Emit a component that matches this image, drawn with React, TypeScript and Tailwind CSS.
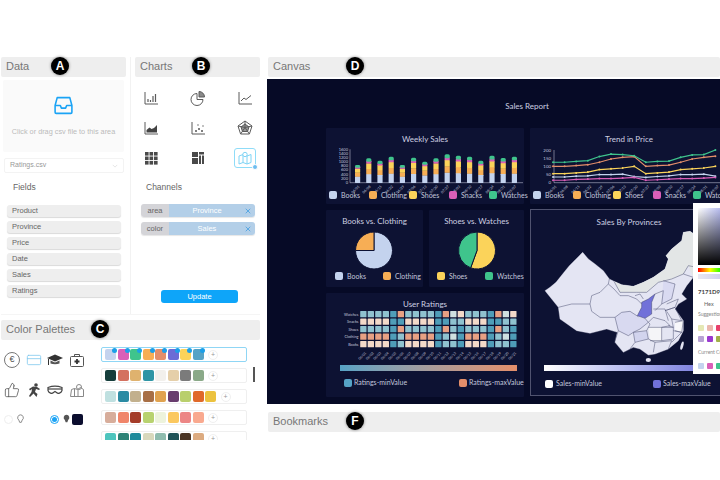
import React from 'react';
import { CreditCard, ThumbsUp, X } from 'lucide-react';

const C = { books: '#c4d3ee', clothing: '#f7ae55', shoes: '#fbd35a', snacks: '#d95fb8', watches: '#3fc48c' };
const legend5 = [
  { label: 'Books', color: C.books },
  { label: 'Clothing', color: C.clothing },
  { label: 'Shoes', color: C.shoes },
  { label: 'Snacks', color: C.snacks },
  { label: 'Watches', color: C.watches },
];
const dates = ['06/01', '06/08', '06/15', '06/22', '06/29', '07/06', '07/13', '07/20', '07/27', '08/03', '08/10', '08/17', '08/24', '08/31', '09/07'];

const fields = ['Product', 'Province', 'Price', 'Date', 'Sales', 'Ratings'];
const palettes = [
  ['#c4d3ee', '#d95fb8', '#3fc48c', '#f7ae55', '#e38e6a', '#6c6bd6', '#fbd35a', '#56a3c6'],
  ['#163e3c', '#d4715f', '#dfb26e', '#2f95a5', '#f2f0ec', '#e5cfa9', '#7b7b7b', '#8aa988'],
  ['#bfe0e0', '#2b8ba3', '#c2b08d', '#a86f45', '#e0a24f', '#683c6e', '#b9cf6c', '#e0692a', '#ecc23e'],
  ['#d7ad9b', '#f0856a', '#a43c28', '#b8d26f', '#edf3dc', '#fbc85f', '#ec8685', '#f9a98f'],
  ['#4dc4bd', '#2e8276', '#1f8b9b', '#d8d8bc', '#8fbcae', '#215458', '#4b3524', '#dcab80'],
];

function Badge({ letter, left }: { letter: string; left: number }) {
  return (
    <div
      className="absolute top-[0px] flex h-[18px] w-[18px] items-center justify-center rounded-full bg-black text-[12px] font-bold text-white shadow-[0_0_3px_rgba(0,0,0,0.5)]"
      style={{ left }}
    >
      {letter}
    </div>
  );
}

function PanelHeader({ title, letter, left }: { title: string; letter: string; left: number }) {
  return (
    <div className="relative flex h-[20px] items-center rounded-[2px] bg-[#eeeeee] pb-[1px] pl-[5px] text-[11px] text-[#777777]">
      {title}
      <Badge letter={letter} left={left} />
    </div>
  );
}

const stroke = '#5b5b5b';
const chartIcons = [
  <g key="bar" stroke={stroke} fill="none">
    <path d="M2 2v12h13" strokeWidth="1" />
    <path d="M5 12V9M7.500 12V10M10 12V6M12.500 12V4" strokeWidth="1.200" />
  </g>,
  <g key="pie" stroke={stroke} fill="none" strokeWidth="1">
    <path d="M7 3.500a6 6 0 1 0 6 6H7z" />
    <path d="M9 1.500a5.500 5.500 0 0 1 5.500 5.500H9z" fill="#8a8a8a" />
  </g>,
  <g key="line" stroke={stroke} fill="none" strokeWidth="1">
    <path d="M2 2v12h13" />
    <path d="M4 11l3-3 2 1.500 5-4" />
  </g>,
  <g key="area" stroke={stroke}>
    <path d="M2 2v12h13" fill="none" />
    <path d="M3.500 12.500V10l3-2.500 2 1.500 2.500-1 3-3v7.500z" fill="#444" stroke="none" />
  </g>,
  <g key="scatter" fill="#555">
    <path d="M2 2v12h13" fill="none" stroke={stroke} />
    <circle cx="6" cy="11" r="1" />
    <circle cx="9" cy="9" r="1" />
    <circle cx="12" cy="11" r="1" />
    <circle cx="8" cy="5" r=".7" />
    <circle cx="13" cy="6" r=".7" />
  </g>,
  <g key="radar" fill="none" stroke={stroke} strokeWidth="1">
    <path d="M8 1l7 5-2.600 8H3.600L1 6z" />
    <path d="M8 4l4 3-1.500 4.500h-5L4 7z" fill="#999" />
    <path d="M8 1v6.500M15 6L8 7.500M12.400 14L8 7.500M3.600 14L8 7.500M1 6l7 1.500" />
  </g>,
  <g key="grid" fill="#4a4a4a">
    {[2, 6.5, 11].flatMap((y) =>
      [2, 6.5, 11].map((x) => <rect key={`${x}-${y}`} x={x} y={y} width="3.600" height="3.600" />)
    )}
  </g>,
  <g key="tree" fill="#4a4a4a">
    <rect x="2" y="2" width="6" height="5" />
    <rect x="2" y="8" width="6" height="6" />
    <rect x="9" y="2" width="5" height="2.500" />
    <rect x="9" y="5.500" width="2" height="8.500" />
    <rect x="12" y="5.500" width="2" height="8.500" />
  </g>,
  <g key="map" fill="none" stroke="#7fd4f5" strokeWidth="1">
    <path d="M2 6l4-1.500 4 1.500 4-1.500v8l-4 1.500-4-1.500-4 1.500z" />
    <path d="M6 4.500v8M10 6v8" />
    <circle cx="8" cy="4.500" r="2.200" fill="#fff" />
  </g>,
];

function Legend({ items, step, pad }: { items: { label: string; color: string }[]; step: number; pad: number }) {
  return (
    <div className="flex h-[10px] items-center" style={{ paddingLeft: pad }}>
      {items.map((i) => (
        <div key={i.label} className="flex shrink-0 items-center gap-[4px]" style={{ width: step }}>
          <span className="h-[8px] w-[8px] shrink-0 rounded-[2px]" style={{ background: i.color }} />
          <span className="text-[7px] leading-none whitespace-nowrap text-[#c3c7dc]">{i.label}</span>
        </div>
      ))}
    </div>
  );
}

function CardTitle({ children }: { children: React.ReactNode }) {
  return <div className="pt-[6px] text-center text-[8px] leading-[10px] text-[#cdd0e2]">{children}</div>;
}

function WeeklySales() {
  const tops = [135, 115, 122, 110, 135, 113, 125, 115, 103, 107, 110, 122, 107, 114, 110];
  const base = 182.7;
  return (
    <svg viewBox="326 144 198 46" width={198} height={46} className="block overflow-visible">
      <path d="M350 149.300V182.700H523" stroke="#d8dbea" strokeWidth=".5" fill="none" />
      {[0, 200, 400, 600, 800, 1000, 1200, 1400, 1600].map((v, i) => (
        <text key={v} x={348} y={184 - i * 4.17} fontSize="4" textAnchor="end" fill="#c3c7dc">{v}</text>
      ))}
      {tops.map((t, i) => {
        const x = 355 + i * 11.2;
        const h = (188 - t) / 3;
        const parts = [
          [0.36, C.books],
          [0.22, C.clothing],
          [0.22, C.shoes],
          [0.1, C.snacks],
          [0.1, C.watches],
        ] as const;
        let y = base;
        return (
          <g key={i}>
            {parts.map(([p, col], k) => {
              const ph = h * p;
              y -= ph;
              return <rect key={k} x={x} y={y} width="5.200" height={ph + (k === 4 ? 1 : 0.3)} rx={k === 4 ? 1.5 : 0.4} fill={col} />;
            })}
            <text x={x + 4} y={187} fontSize="3.600" fill="#c3c7dc" textAnchor="end" transform={`rotate(-45 ${x + 4} 186)`}>{dates[i]}</text>
          </g>
        );
      })}
    </svg>
  );
}

function TrendPrice() {
  const series = [
    { c: C.books, v: [35, 35, 40, 42, 50, 50, 52, 38, 32, 38, 42, 50, 50, 52, 40] },
    { c: C.snacks, v: [15, 15, 20, 22, 25, 25, 28, 32, 15, 18, 22, 25, 25, 28, 32] },
    { c: C.shoes, v: [55, 55, 60, 65, 80, 85, 90, 100, 55, 60, 65, 80, 85, 90, 100] },
    { c: '#e38e6a', v: [100, 100, 105, 110, 125, 145, 155, 160, 100, 105, 108, 125, 145, 155, 162] },
    { c: C.watches, v: [125, 125, 130, 135, 160, 175, 172, 165, 125, 130, 132, 155, 170, 172, 200] },
  ];
  const px = (i: number) => 553 + i * 11.6;
  const py = (v: number) => 182.7 - (v / 200) * 32.7;
  return (
    <svg viewBox="530 144 198 46" width={198} height={46} className="block overflow-visible">
      <path d="M554 150V182.700H725" stroke="#d8dbea" strokeWidth=".5" fill="none" />
      {[0, 50, 100, 150, 200].map((v) => (
        <text key={v} x={551} y={py(v) + 1.500} fontSize="4.400" textAnchor="end" fill="#c3c7dc">{v}</text>
      ))}
      {series.map((s) => (
        <g key={s.c}>
          <polyline points={s.v.map((v, i) => `${px(i)},${py(v)}`).join(' ')} fill="none" stroke={s.c} strokeWidth="1.200" />
          {s.v.map((v, i) => <circle key={i} cx={px(i)} cy={py(v)} r="1" fill={s.c} />)}
        </g>
      ))}
      {dates.map((d, i) => (
        <text key={d} x={px(i) + 3} y={187} fontSize="3.600" fill="#c3c7dc" textAnchor="end" transform={`rotate(-45 ${px(i) + 3} 186)`}>{d}</text>
      ))}
    </svg>
  );
}

function wedge(cx: number, cy: number, r: number, a0: number, a1: number) {
  const p = (a: number) => [cx + r * Math.sin((a * Math.PI) / 180), cy - r * Math.cos((a * Math.PI) / 180)];
  const [x0, y0] = p(a0);
  const [x1, y1] = p(a1);
  return `M${cx} ${cy}L${x0} ${y0}A${r} ${r} 0 ${a1 - a0 > 180 ? 1 : 0} 1 ${x1} ${y1}Z`;
}

function Pie({ a, b, split }: { a: string; b: string; split: number }) {
  return (
    <svg viewBox="0 0 95 45" width={95} height={45} className="block">
      <path d={wedge(48, 24.500, 18.500, 0, split)} fill={a} stroke="#0d1233" strokeWidth="1" />
      <path d={wedge(48, 24.500, 18.500, split, 360)} fill={b} stroke="#0d1233" strokeWidth="1" />
    </svg>
  );
}

const heatRows = [
  { name: 'Watches', p: 'bbbbaebbbbaecdbbbaecd' },
  { name: 'Snacks', p: 'ddddaaddddaabbdddaabb' },
  { name: 'Shoes', p: 'bbbbaebbbbaebabbbaeba' },
  { name: 'Clothing', p: 'eeeeabeeeeabcaeeeabca' },
  { name: 'Books', p: 'ddddabddddabbadddabba' },
];
const heatColor: Record<string, string> = { a: '#4f9db8', b: '#8fc2cf', c: '#cfe0e0', d: '#f3d9c8', e: '#e8a083' };

function Heatmap() {
  return (
    <svg viewBox="326 310 198 50" width={198} height={50} className="block overflow-visible">
      {heatRows.map((r, ri) => (
        <g key={r.name}>
          <text x={358.500} y={316.500 + ri * 7.5} fontSize="3.800" textAnchor="end" fill="#c3c7dc">{r.name}</text>
          {r.p.split('').map((ch, ci) => (
            <rect key={ci} x={360.200 + ci * 7.5} y={312 + ri * 7.5} width="6.300" height="6.300" rx=".6" fill={heatColor[ch]} />
          ))}
        </g>
      ))}
      {Array.from({ length: 21 }).map((_, i) => {
        const x = 365 + i * 7.5;
        return <text key={i} x={x} y={355} fontSize="3.400" textAnchor="end" fill="#c3c7dc" transform={`rotate(-45 ${x} 353)`}>{`06/${String(i + 1).padStart(2, '0')}`}</text>;
      })}
    </svg>
  );
}

function ChinaMap() {
  const borders = [
    '55,250 95,240 150,240 155,215 180,205 205,180 208,165',
    '150,240 155,262 180,280 225,280 245,265 270,262 295,278',
    '205,180 222,195 240,215 265,215 290,225 305,240',
    '285,215 300,210 310,225',
    '222,172 240,205 290,205 320,205 355,175 395,165 430,150 445,125',
    '225,280 235,320 225,350',
    '315,283 325,295 300,315 280,325 265,335 235,320',
    '325,295 330,300 320,320 280,325',
    '320,320 325,345 285,355 280,325',
    '285,355 270,375',
    '325,345 345,355 340,385',
    '345,355 395,350 385,375',
    '325,310 365,310 365,350 330,350',
    '325,295 340,280 375,290 390,305 365,310',
    '340,255 375,255 385,290',
    '345,210 370,200 365,240 345,260',
    '370,170 405,180 395,225 365,240',
    '380,240 415,225 405,250 375,260',
    '375,260 405,250 425,290 395,285',
    '380,262 395,285 400,310 385,305',
    '405,295 430,290 425,325 405,320',
    '365,310 400,310 400,345 365,350',
    '400,320 425,325 395,355',
    '445,125 470,130 520,120',
    '430,150 460,160',
  ];
  return (
    <svg viewBox="-30 9 594 411" width={198} height={137} className="block">
      <path
        d="M15 200L30 190 48 175 72 145 88 125 105 108 128 85 145 105 165 120 190 140 208 165 222 172 245 182 280 187 310 175 340 160 375 135 385 105 378 95 395 75 425 50 430 25 450 22 470 35 520 60 520 130 460 160 440 185 425 210 440 225 415 240 405 255 430 290 430 320 415 350 385 375 345 390 325 393 300 375 280 370 250 385 225 355 232 325 200 315 150 328 110 320 60 285 55 250 35 225Z"
        fill="#e4e5f3"
        stroke="#e4e5f3"
      />
      <path d="M222 172L245 182 280 187 310 175 340 160 375 135 385 105 378 95 395 75 425 50 430 25 450 22 470 35 520 60 520 130 460 160 445 125 430 150 395 165 355 175 320 205 240 205Z" fill="#e3e6e6" />
      <path d="M225 280L245 265 270 262 295 278 315 283 325 295 300 315 280 325 265 335 235 320Z" fill="#d8d9f0" />
      <path d="M280 325L320 320 325 345 285 355Z" fill="#d2d4ee" />
      <path d="M325 310L365 310 365 350 330 350Z" fill="#f5f5f8" />
      <path d="M405 295L430 290 425 325 405 320Z" fill="#f8f8fb" />
      <path d="M370 170L405 180 395 225 365 240Z" fill="#d9daf1" />
      <path d="M345 210L335 235 335 270 315 283 292 275 305 250 305 235 325 225Z" fill="#7171d9" stroke="#44486e" strokeWidth="1.500" />
      {borders.map((b) => <polyline key={b} points={b} fill="none" stroke="#4b4f70" strokeWidth="1.500" />)}
      <ellipse cx="325" cy="408" rx="8" ry="6" fill="#e4e5f3" />
      <ellipse cx="426" cy="365" rx="4" ry="13" fill="#e4e5f3" transform="rotate(15 426 365)" />
    </svg>
  );
}

function ColorPicker() {
  const row = (colors: string[]) => (
    <div className="flex gap-[3px]">
      {colors.map((c) => <span key={c} className="h-[6px] w-[6px] shrink-0 rounded-[1px]" style={{ background: c }} />)}
    </div>
  );
  return (
    <div className="absolute left-[426px] top-[124px] h-[171px] w-[60px] bg-white pl-[5px] pt-[5px]">
      <div className="relative h-[57px] w-[48px] bg-gradient-to-r from-white to-[#7171d9]">
        <div className="absolute inset-0 bg-gradient-to-b from-transparent to-black" />
      </div>
      <div className="mt-[3px] h-[4px] w-[48px] bg-[linear-gradient(to_right,#f00,#ff0,#0f0,#0ff,#00f)]" />
      <div className="mt-[2px] h-[5px] w-[48px] bg-gradient-to-r from-[#e8e8f2] to-[#b5b5ea]" />
      <div className="mt-[9px] text-[6px] leading-[8px] font-bold text-[#444444]">7171D9</div>
      <div className="mt-[4px] pl-[6px] text-[5.500px] leading-[8px] text-[#666666]">Hex</div>
      <div className="mt-[3px] text-[5px] leading-[7px] whitespace-nowrap text-[#888888]">Suggestions</div>
      <div className="mt-[7px] flex flex-col gap-[5px]">
        {row(['#e5e8b5', '#ebb8ae', '#e8406b'])}
        {row(['#b7a3d4', '#9a3ad0', '#a2b04a'])}
      </div>
      <div className="mt-[7px] text-[5px] leading-[7px] whitespace-nowrap text-[#888888]">Current Color</div>
      <div className="mt-[7px]">{row(['#c4d3ee', '#d95fb8', '#3fc48c'])}</div>
    </div>
  );
}

function Canvas() {
  const card = 'rounded-[1px] bg-[#0d1233]';
  return (
    <div className="relative -ml-px mt-[2px] h-[325px] overflow-hidden bg-[#060a26] pl-[59px] [font-family:Lato,sans-serif]">
      <div className="flex h-[49px] w-[402px] items-end justify-center pb-[17px] text-[8px] leading-[10px] text-[#cdd0e2]">Sales Report</div>
      <div className="flex w-[402px] gap-[6px]">
        <div className="flex w-[198px] shrink-0 flex-col gap-[6px]">
          <div className={`${card} h-[76px]`}>
            <CardTitle>Weekly Sales</CardTitle>
            <WeeklySales />
            <Legend items={legend5} step={40} pad={3} />
          </div>
          <div className="flex h-[77px] gap-[6px]">
            <div className={`${card} w-[97px]`}>
              <CardTitle>Books vs. Clothing</CardTitle>
              <Pie a={C.books} b={C.clothing} split={270} />
              <Legend items={[legend5[0], legend5[1]]} step={48} pad={9} />
            </div>
            <div className={`${card} w-[95px]`}>
              <CardTitle>Shoes vs. Watches</CardTitle>
              <Pie a={C.shoes} b={C.watches} split={200} />
              <Legend items={[legend5[2], legend5[4]]} step={48} pad={8} />
            </div>
          </div>
          <div className={`${card} h-[104px]`}>
            <CardTitle>User Ratings</CardTitle>
            <Heatmap />
            <div className="ml-[14px] mt-[6px] h-[6px] w-[177px] bg-gradient-to-r from-[#56a3c6] to-[#e38e6a]" />
            <div className="ml-[18px] mt-[7px] flex h-[9px] w-[180px] items-center text-[7px] whitespace-nowrap text-[#c3c7dc]">
              <span className="mr-[2px] h-[8px] w-[8px] shrink-0 rounded-[2px] bg-[#56a3c6]" />
              <span className="w-[105px] shrink-0">Ratings-minValue</span>
              <span className="mr-[2px] h-[8px] w-[8px] shrink-0 rounded-[2px] bg-[#e38e6a]" />
              <span>Ratings-maxValue</span>
            </div>
          </div>
        </div>
        <div className="flex w-[198px] shrink-0 flex-col gap-[5px]">
          <div className={`${card} h-[76px]`}>
            <CardTitle>Trend in Price</CardTitle>
            <TrendPrice />
            <Legend items={legend5} step={40} pad={3} />
          </div>
          <div className="h-[187px] w-[198px] border border-[#50536f] bg-[#0d1233]">
            <div className="flex h-[17px] items-end justify-center text-[8px] leading-[10px] text-[#cdd0e2]">Sales By Provinces</div>
            <div className="-ml-px">
              <ChinaMap />
            </div>
            <div className="ml-[13px] mt-[1px] h-[6px] w-[172px] bg-gradient-to-r from-white to-[#7171d9]" />
            <div className="ml-[14px] mt-[8px] flex h-[9px] items-center text-[7px] whitespace-nowrap text-[#c3c7dc]">
              <span className="mr-[3px] h-[8px] w-[8px] shrink-0 rounded-[2px] bg-white" />
              <span className="w-[97px] shrink-0">Sales-minValue</span>
              <span className="mr-[2px] h-[8px] w-[8px] shrink-0 rounded-[2px] bg-[#7171d9]" />
              <span>Sales-maxValue</span>
            </div>
          </div>
        </div>
      </div>
      <ColorPicker />
    </div>
  );
}

function PaletteIcons() {
  const c = 'h-[16px] w-[16px] shrink-0';
  return (
    <div className="w-[100px] shrink-0 pl-[3px] pt-[12px] text-[#555555]">
      <div className="flex gap-[5.500px]">
        <span className="flex h-[16px] w-[16px] items-center justify-center rounded-full border border-[#777777] text-[9px]">€</span>
        <CreditCard className={`${c} text-[#7fc8ee]`} strokeWidth={1.2} />
        <svg viewBox="0 0 16 16" className={c} fill="#333333">
          <path d="M8 2.500L16 6 8 9.500 0 6z" />
          <path d="M3.500 8.500v3c2.500 1 6.500 1 9 0v-3L8 10.500z" fill="#555555" />
          <path d="M1.500 7v6" stroke="#333333" fill="none" />
        </svg>
        <svg viewBox="0 0 16 16" className={c} fill="none" stroke="#555555" strokeWidth="1">
          <rect x="1.500" y="4.500" width="13" height="10" rx="1" />
          <path d="M5.500 4.500V2.500h5v2" />
          <path d="M8 7v5M5.500 9.500h5" strokeWidth="1.800" stroke="#333333" />
        </svg>
      </div>
      <div className="mt-[14px] flex gap-[5.500px]">
        <ThumbsUp className={c} strokeWidth={1.2} />
        <svg viewBox="0 0 16 16" className={c} fill="#444444">
          <circle cx="10" cy="3" r="1.800" />
          <path d="M3 7l4-2.500 4 .5 3 2-1 1-3-1-1 3 2.500 2-1 3-3-3.500-3.500 3.500-1-1 2.500-4 .5-3-2 1.500z" />
        </svg>
        <svg viewBox="0 0 16 16" className={c} fill="none" stroke="#444444" strokeWidth="1.200">
          <path d="M1 5.500c4-1.500 10-1.500 14 0v3c-1 3-4 3.500-5.500 2L8 9.500l-1.500 1c-1.500 1.500-4.500 1-5.500-2z" />
          <path d="M1 7h14" />
        </svg>
        <svg viewBox="0 0 16 16" className={c} fill="none" stroke="#888888" strokeWidth="1">
          <path d="M1.500 14.500l1-7 3-1 3 1 3-2 3 2v7z" />
          <circle cx="10" cy="5" r="2.500" />
          <path d="M5.500 6.500v8M9 8v6.500" />
        </svg>
      </div>
      <div className="mt-[15px] flex h-[12px] items-center">
        <span className="h-[9px] w-[9px] rounded-full border border-[#eeeeee]" />
        <svg viewBox="0 0 10 12" className="ml-[3px] h-[10px] w-[9px]" fill="none" stroke="#777777">
          <path d="M5 1a3.500 3.500 0 0 0-2 6.300L4 10h2l1-2.700A3.500 3.500 0 0 0 5 1z" />
        </svg>
        <span className="ml-[25px] flex h-[9px] w-[9px] items-center justify-center rounded-full border border-[#1aa3f5]">
          <span className="h-[5px] w-[5px] rounded-full bg-[#1aa3f5]" />
        </span>
        <svg viewBox="0 0 10 12" className="ml-[3px] h-[10px] w-[9px]" fill="#555555">
          <path d="M5 1a3.500 3.500 0 0 0-2 6.300L4 10h2l1-2.700A3.500 3.500 0 0 0 5 1z" />
        </svg>
        <span className="ml-[1px] h-[11px] w-[11px] rounded-[2px] bg-[#0b0d2e]" />
      </div>
    </div>
  );
}

function PaletteList() {
  return (
    <div className="relative w-[160px] pt-[7px]">
      <div className="flex w-[146px] flex-col gap-[6px]">
        {palettes.map((p, i) => (
          <div
            key={i}
            className={`flex h-[15px] items-center gap-[1.500px] rounded-[2px] border pl-[3px] ${i === 0 ? 'border-[#8fd6f5]' : 'border-[#efefef]'}`}
          >
            {p.map((col, k) => (
              <span key={k} className="relative h-[11px] w-[11px] shrink-0 rounded-[2px]" style={{ background: col }}>
                {i === 0 && <span className="absolute -right-[1px] -top-[1px] h-[5px] w-[5px] rounded-full bg-[#1c9fe8]" />}
              </span>
            ))}
            <span className="ml-[3px] flex h-[10px] w-[10px] items-center justify-center rounded-full border border-[#f0f0f0] text-[7px] leading-none text-[#999999]">+</span>
          </div>
        ))}
      </div>
      <div className="absolute left-[152px] top-[27px] h-[15px] w-[2px] bg-[#555555]" />
    </div>
  );
}

export default function App() {
  return (
    <div className="flex h-[480px] w-[720px] overflow-hidden bg-white pl-px pt-[57px] [font-family:'Liberation_Sans',sans-serif]">
      <div className="w-[259px] shrink-0">
        <div className="flex h-[258px] border-b border-[#f5f5f5]">
          {/* Data */}
          <div className="w-[125px] shrink-0">
            <PanelHeader title="Data" letter="A" left={50} />
            <div className="ml-[2px] mt-[3px] flex h-[72px] w-[121px] flex-col items-center rounded-[2px] bg-[#fafafa] pt-[15px]">
              <svg viewBox="0 0 20 20" className="h-[21px] w-[21px]" fill="none" stroke="#1aa3f5" strokeWidth="1.500" strokeLinejoin="round">
                <path d="M2 10l2-7.500h12l2 7.500v6.500a1 1 0 0 1-1 1H3a1 1 0 0 1-1-1z" />
                <path d="M2 10h5l1 2.500h4l1-2.500h5" />
              </svg>
              <div className="mt-[11px] text-[7.300px] leading-[10px] whitespace-nowrap text-[#bbbbbb]">Click or drag csv file to this area</div>
            </div>
            <div className="ml-[3px] mt-[6px] flex h-[15px] w-[120px] items-center justify-between rounded-[2px] border border-[#f3f3f3] pl-[5px] pr-[5px] text-[7px] text-[#999999]">
              Ratings.csv
              <svg viewBox="0 0 8 5" className="h-[4px] w-[6px]" fill="none" stroke="#dddddd"><path d="M1 1l3 3 3-3" /></svg>
            </div>
            <div className="ml-[12px] mt-[9px] text-[8.500px] leading-[10px] text-[#666666]">Fields</div>
            <div className="ml-[6px] mt-[13px] flex w-[114px] flex-col gap-[4px]">
              {fields.map((f) => (
                <div key={f} className="flex h-[12px] items-center rounded-[3px] bg-[#eeeeee] pl-[5px] text-[7.500px] text-[#666666] shadow-[0_1px_1px_rgba(0,0,0,0.15)]">{f}</div>
              ))}
            </div>
          </div>
          <div className="ml-[4px] w-px shrink-0 bg-[#f2f2f2]" />
          {/* Charts */}
          <div className="ml-[4px] w-[125px] shrink-0">
            <PanelHeader title="Charts" letter="B" left={57} />
            <div className="ml-[8px] mt-[13px] grid grid-cols-[16px_16px_16px] gap-x-[31px] gap-y-[14px]">
              {chartIcons.map((icon, i) => (
                <div key={i} className="relative h-[16px] w-[16px]">
                  <svg viewBox="0 0 16 16" className="h-[16px] w-[16px]">{icon}</svg>
                  {i === 8 && (
                    <>
                      <div className="absolute -inset-x-[3px] -inset-y-[2px] rounded-[3px] border border-[#8fdcf8]" />
                      <div className="absolute -bottom-[4px] -right-[5px] h-[6px] w-[6px] rounded-full border border-white bg-[#6dbdf0]" />
                    </>
                  )}
                </div>
              ))}
            </div>
            <div className="ml-[11px] mt-[16px] text-[8.500px] leading-[10px] text-[#666666]">Channels</div>
            <div className="ml-[6px] mt-[12px] flex w-[114px] flex-col gap-[5px]">
              {[['area', 'Province'], ['color', 'Sales']].map(([k, v]) => (
                <div key={k} className="flex h-[13px] overflow-hidden rounded-[3px] text-[7.500px] shadow-[0_1px_1px_rgba(0,0,0,0.1)]">
                  <div className="flex w-[28px] items-center justify-center bg-[#d4d4d8] text-[#666666]">{k}</div>
                  <div className="relative flex flex-1 items-center justify-center bg-[#b3cfe8] pr-[10px] text-white">
                    {v}
                    <X className="absolute right-[3px] h-[8px] w-[8px] text-[#2f95e0]" strokeWidth={2} />
                  </div>
                </div>
              ))}
            </div>
            <div className="ml-[26px] mt-[55px] flex h-[13px] w-[77px] items-center justify-center rounded-[3px] bg-[#0ea5f9] text-[7.500px] text-white">Update</div>
          </div>
        </div>
        {/* Color Palettes */}
        <div className="mt-[5px] w-[259px]">
          <PanelHeader title="Color Palettes" letter="C" left={90} />
          <div className="flex h-[100px] overflow-hidden">
            <PaletteIcons />
            <PaletteList />
          </div>
        </div>
      </div>
      {/* Canvas + Bookmarks */}
      <div className="ml-[8px] w-[452px] shrink-0">
        <PanelHeader title="Canvas" letter="D" left={78} />
        <Canvas />
        <div className="mt-[8px]">
          <PanelHeader title="Bookmarks" letter="F" left={78} />
        </div>
      </div>
    </div>
  );
}
